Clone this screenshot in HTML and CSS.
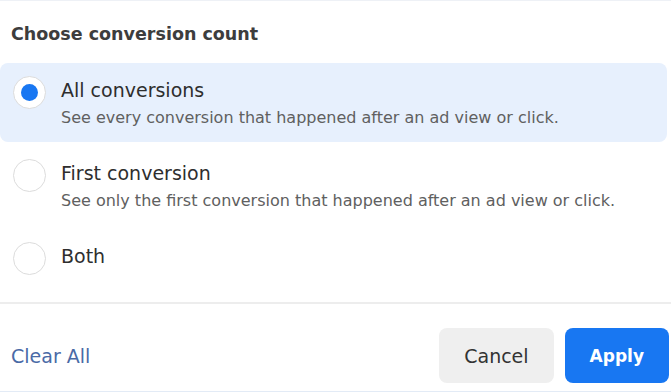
FILE: index.html
```html
<!DOCTYPE html>
<html lang="en">
<head>
  <meta charset="UTF-8">
  <meta name="viewport" content="width=device-width, initial-scale=1.0">
  <title>Choose conversion count</title>
  <link rel="stylesheet" href="styles.css">
</head>
<body>
  <div class="panel">
    <h3 class="panel-title">Choose conversion count</h3>

    <div class="options">
      <label class="option selected">
        <input type="radio" name="count" value="all" checked>
        <span class="option-text">
          <span class="option-label">All conversions</span>
          <span class="option-desc">See every conversion that happened after an ad view or click.</span>
        </span>
      </label>
      <label class="option">
        <input type="radio" name="count" value="first">
        <span class="option-text">
          <span class="option-label">First conversion</span>
          <span class="option-desc">See only the first conversion that happened after an ad view or click.</span>
        </span>
      </label>
      <label class="option">
        <input type="radio" name="count" value="both">
        <span class="option-text">
          <span class="option-label">Both</span>
        </span>
      </label>
    </div>

    <div class="panel-footer">
      <a class="clear-link" href="#">Clear All</a>
      <div class="actions">
        <button class="btn btn-cancel" type="button">Cancel</button>
        <button class="btn btn-apply" type="button">Apply</button>
      </div>
    </div>
  </div>
</body>
</html>
```

FILE: styles.css
```css
body {
  margin: 0;
  font-family: "DejaVu Sans", "Liberation Sans", Arial, sans-serif;
  background-color: #fff;
  color: #333;
}

.panel {
  width: 671px;
  height: 392px;
  box-sizing: border-box;
  border-top: 1px solid #eef1f6;
  border-bottom: 1px solid #e3ebf6;
  display: flex;
  flex-direction: column;
}

.panel-title {
  margin: 0;
  padding: 22px 11px 0;
  font-size: 17.5px;
  line-height: 22px;
  font-weight: bold;
  color: #3d3d3d;
}

.options {
  margin-top: 18px;
  display: flex;
  flex-direction: column;
  gap: 4px;
}

.option {
  display: flex;
  align-items: flex-start;
  gap: 15px;
  margin-right: 4px;
  padding: 16px 13px 14px;
  border-radius: 8px;
  cursor: pointer;
}

.option.selected {
  background-color: #e7f0fd;
}

/* custom radio circle */
.option input[type="radio"] {
  appearance: none;
  -webkit-appearance: none;
  flex: none;
  width: 33px;
  height: 33px;
  margin: -3px 0 0 0;
  border: 1px solid #dcdcdc;
  border-radius: 50%;
  background-color: #fff;
  display: flex;
  align-items: center;
  justify-content: center;
}

.option input[type="radio"]:checked::after {
  content: "";
  width: 17px;
  height: 17px;
  border-radius: 50%;
  background-color: #1877f2;
}

.option-text {
  display: flex;
  flex-direction: column;
}

.option-label {
  font-size: 19px;
  line-height: 22px;
  color: #2e2e2e;
}

.option-desc {
  margin-top: 7px;
  font-size: 16px;
  line-height: 20px;
  color: #606060;
}

.panel-footer {
  margin-top: auto;
  border-top: 2px solid #ededed;
  padding: 24px 2px 8px 11px;
  display: flex;
  justify-content: space-between;
  align-items: center;
}

.clear-link {
  font-size: 19px;
  color: #4a6aa6;
  text-decoration: none;
}

.actions {
  display: flex;
  gap: 11px;
}

.btn {
  height: 55px;
  padding: 0 25px;
  border: none;
  border-radius: 8px;
  font-family: inherit;
  cursor: pointer;
}

.btn-cancel {
  background-color: #efefef;
  color: #333;
  font-size: 19px;
}

.btn-apply {
  background-color: #1877f2;
  color: #fff;
  font-size: 17px;
  font-weight: bold;
}
```
